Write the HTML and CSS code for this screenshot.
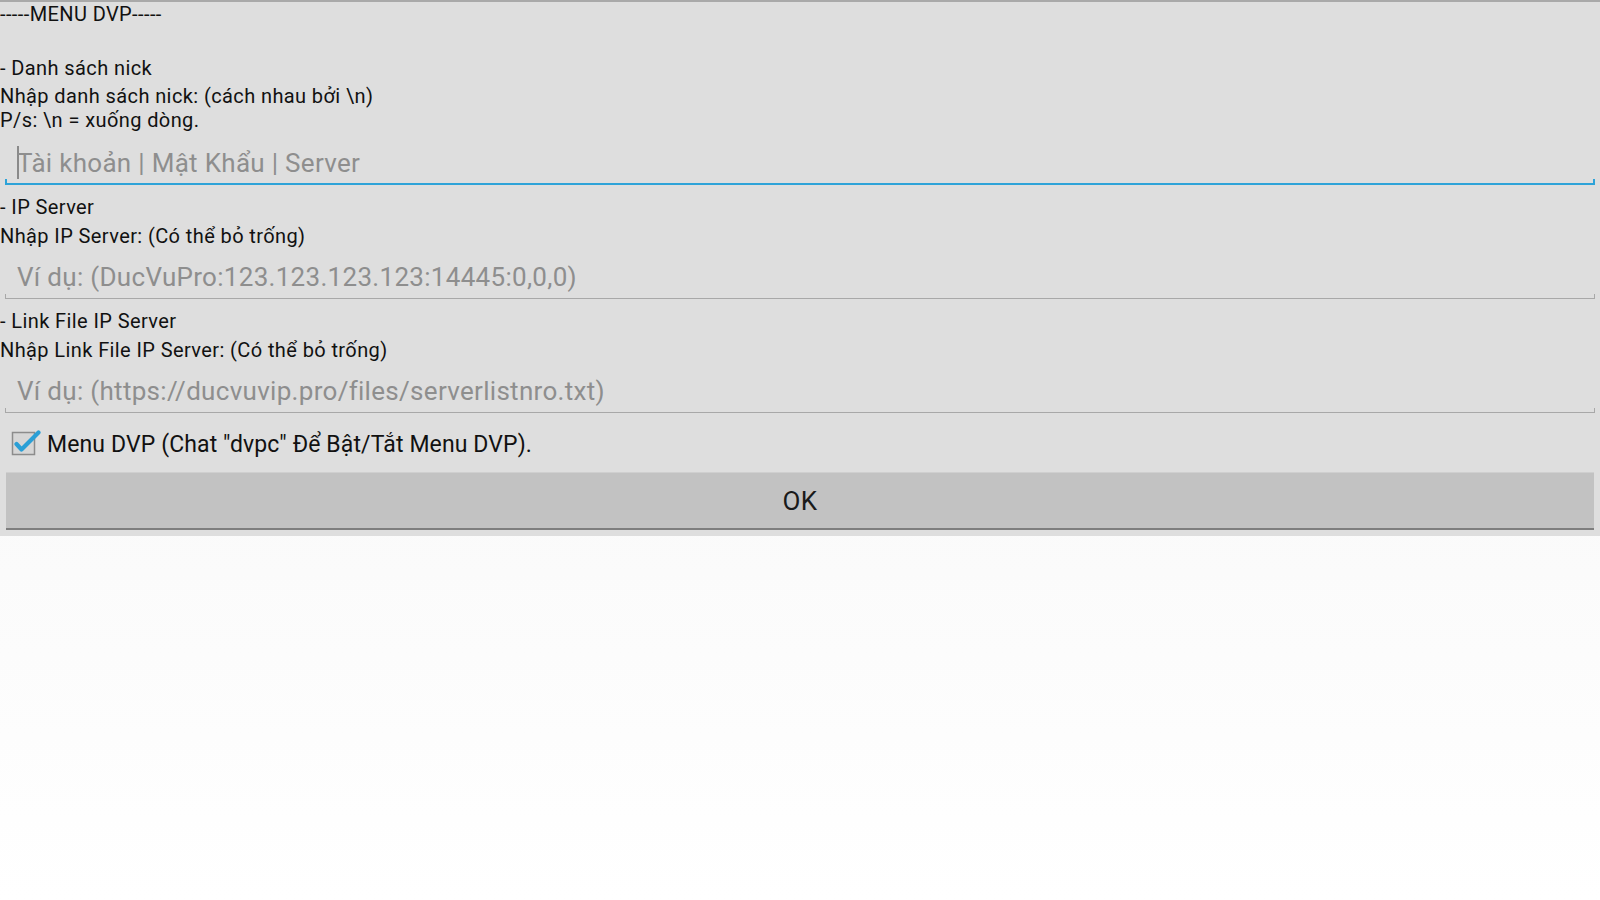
FILE: index.html
```html
<!DOCTYPE html>
<html lang="vi">
<head>
<meta charset="utf-8">
<title>MENU DVP</title>
<link rel="stylesheet" href="styles.css">
</head>
<body>
<div class="panel">
  <p class="label title">-----MENU DVP-----</p>
  <p class="label section first">- Danh sách nick</p>
  <p class="label hint first">Nhập danh sách nick: (cách nhau bởi \n)<br>P/s: \n = xuống dòng.</p>
  <div class="field focused">
    <div class="field-text"><span class="caret"></span><span class="placeholder">Tài khoản | Mật Khẩu | Server</span></div>
    <div class="underline"></div>
  </div>

  <p class="label section">- IP Server</p>
  <p class="label hint">Nhập IP Server: (Có thể bỏ trống)</p>
  <div class="field">
    <div class="field-text"><span class="placeholder">Ví dụ: (DucVuPro:123.123.123.123:14445:0,0,0)</span></div>
    <div class="underline"></div>
  </div>

  <p class="label section tight">- Link File IP Server</p>
  <p class="label hint">Nhập Link File IP Server: (Có thể bỏ trống)</p>
  <div class="field">
    <div class="field-text"><span class="placeholder">Ví dụ: (https://ducvuvip.pro/files/serverlistnro.txt)</span></div>
    <div class="underline"></div>
  </div>

  <div class="check-row">
    <span class="checkbox">
      <svg width="30" height="30" viewBox="0 0 30 30">
        <rect x="1.5" y="4.5" width="22" height="22" fill="#d6d6d6" stroke="#8c8c8c" stroke-width="1.5"/>
        <path d="M5.5 16 L10.5 21.5 L27.5 4.5" fill="none" stroke="#2a9fd6" stroke-width="4.2" stroke-linecap="round" stroke-linejoin="round"/>
      </svg>
    </span>
    <span class="check-label">Menu DVP (Chat "dvpc" Để Bật/Tắt Menu DVP).</span>
  </div>

  <div class="button-row">
    <button class="ok">OK</button>
  </div>
</div>
</body>
</html>
```

FILE: styles.css
```css
html, body {
  margin: 0;
  padding: 0;
}
body {
  width: 1600px;
  height: 900px;
  background: linear-gradient(to bottom, #f4f4f4 0%, #ffffff 100%);
  font-family: Roboto, "Noto Sans", "Liberation Sans", sans-serif;
  color: #111;
  overflow: hidden;
}
.panel {
  background: #dedede;
  border-top: 2px solid #a9a9a9;
  padding: 0 0 6px 0;
  display: flex;
  flex-direction: column;
}
.label {
  margin: 0;
  font-size: 20px;
  line-height: 24px;
  letter-spacing: 0.4px;
  color: #111;
}
.section {
  margin-top: 10px;
}
.section.first {
  margin-top: 30px;
}
.section.tight {
  margin-top: 10px;
}
.hint {
  margin-top: 5px;
}
.hint.first {
  margin-top: 4px;
}
.field {
  margin: 0 5px;
  display: flex;
  flex-direction: column;
}
.field-text {
  display: flex;
  align-items: center;
  padding: 14px 0 2px 12px;
  font-size: 26px;
  line-height: 30px;
  letter-spacing: 0.3px;
}
.placeholder {
  color: #8e8e8e;
}
.caret {
  display: inline-block;
  width: 2px;
  height: 33px;
  background: #8a8a8a;
  margin-right: -2px;
}
.underline {
  box-sizing: border-box;
  height: 5px;
  border: 1px solid #a8a8a8;
  border-top: none;
}
.focused .field-text {
  padding-top: 14px;
  padding-bottom: 0;
}
.focused .underline {
  height: 6px;
  border-width: 0 2px 2px 2px;
  border-color: #2ea3d8;
}
.check-row {
  display: flex;
  align-items: flex-start;
  gap: 6px;
  margin: 15px 0 0 11px;
}
.checkbox {
  display: flex;
  width: 30px;
  height: 30px;
}
.check-label {
  margin-top: 3px;
  font-size: 23px;
  line-height: 28px;
  letter-spacing: 0.12px;
  color: #111;
}
.button-row {
  margin: 13px 6px 0 6px;
}
.ok {
  display: block;
  width: 100%;
  height: 58px;
  border: none;
  border-top: 1px solid #cfcfcf;
  border-bottom: 2px solid #7e7e7e;
  background: #c2c2c2;
  font-family: Roboto, "Noto Sans", "Liberation Sans", sans-serif;
  font-size: 26px;
  letter-spacing: 0.5px;
  color: #1a1a1a;
  padding: 0;
}
```
